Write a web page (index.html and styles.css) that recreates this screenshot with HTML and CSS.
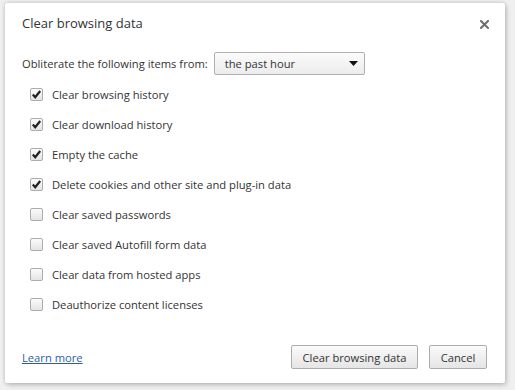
FILE: index.html
```html
<!DOCTYPE html>
<html>
<head>
<meta charset="utf-8">
<link rel="stylesheet" href="styles.css">
</head>
<body>
<div class="dialog">
  <div class="header">
    <div class="title">Clear browsing data</div>
    <div class="close">
      <svg width="9" height="9" viewBox="0 0 9 9"><path d="M1 1L8 8M8 1L1 8" stroke="#6e6e6e" stroke-width="2" stroke-linecap="square"/></svg>
    </div>
  </div>
  <div class="period-row">
    <span class="period-label">Obliterate the following items from:</span>
    <div class="select">
      <span>the past hour</span>
      <svg width="9" height="5" viewBox="0 0 9 5"><path d="M0 0H9L4.5 5Z" fill="#111"/></svg>
    </div>
  </div>
  <ul class="items">
    <li class="item"><span class="cb checked"><svg width="11" height="11" viewBox="0 0 11 11"><path d="M1.8 5.6L4.2 8.2L9.2 2" fill="none" stroke="#222" stroke-width="2.2"/></svg></span>Clear browsing history</li>
    <li class="item"><span class="cb checked"><svg width="11" height="11" viewBox="0 0 11 11"><path d="M1.8 5.6L4.2 8.2L9.2 2" fill="none" stroke="#222" stroke-width="2.2"/></svg></span>Clear download history</li>
    <li class="item"><span class="cb checked"><svg width="11" height="11" viewBox="0 0 11 11"><path d="M1.8 5.6L4.2 8.2L9.2 2" fill="none" stroke="#222" stroke-width="2.2"/></svg></span>Empty the cache</li>
    <li class="item"><span class="cb checked"><svg width="11" height="11" viewBox="0 0 11 11"><path d="M1.8 5.6L4.2 8.2L9.2 2" fill="none" stroke="#222" stroke-width="2.2"/></svg></span>Delete cookies and other site and plug-in data</li>
    <li class="item"><span class="cb"></span>Clear saved passwords</li>
    <li class="item"><span class="cb"></span>Clear saved Autofill form data</li>
    <li class="item"><span class="cb"></span>Clear data from hosted apps</li>
    <li class="item"><span class="cb"></span>Deauthorize content licenses</li>
  </ul>
  <div class="footer">
    <a class="link" href="#">Learn more</a>
    <div class="buttons">
      <button class="btn btn-clear">Clear browsing data</button>
      <button class="btn btn-cancel">Cancel</button>
    </div>
  </div>
</div>
</body>
</html>
```
FILE: styles.css
```css
html, body {
  margin: 0;
  padding: 0;
}
body {
  background: #f0f0f0;
  width: 515px;
  height: 390px;
  overflow: hidden;
  font-family: "Open Sans", "Noto Sans", sans-serif;
  font-size: 11.2px;
  color: #333;
}
.dialog {
  box-sizing: border-box;
  margin: 3px 0 0 5px;
  width: 500px;
  height: 380px;
  background: #fff;
  border-radius: 2px;
  box-shadow: 0 0 4px rgba(0,0,0,0.22), 2px 3px 5px rgba(0,0,0,0.12);
  padding: 0 18px 0 17px;
  display: flex;
  flex-direction: column;
}
.header {
  display: flex;
  justify-content: space-between;
  align-items: center;
  margin-top: 10px;
  height: 20px;
}
.title {
  font-size: 13px;
  line-height: 20px;
  color: #333;
}
.close {
  width: 9px;
  height: 9px;
  margin-right: -2px;
  margin-top: 2px;
  display: flex;
}
.period-row {
  display: flex;
  align-items: center;
  margin-top: 19px;
  height: 23px;
}
.period-label {
  margin-right: 6px;
}
.select {
  box-sizing: border-box;
  width: 151px;
  height: 23px;
  border: 1px solid #b0b0b0;
  border-radius: 2px;
  background: linear-gradient(#fbfbfb, #ececec);
  display: flex;
  align-items: center;
  justify-content: space-between;
  padding: 0 6px 0 10px;
}
.items {
  list-style: none;
  margin: 4px 0 0 0;
  padding: 0 0 0 8px;
}
.item {
  display: flex;
  align-items: center;
  height: 30px;
}
.cb {
  box-sizing: border-box;
  width: 13px;
  height: 13px;
  border: 1px solid #acacac;
  border-radius: 2px;
  background: linear-gradient(#fbfbfb, #e4e4e4);
  margin-right: 9px;
  display: flex;
  align-items: center;
  justify-content: center;
}
.footer {
  display: flex;
  justify-content: space-between;
  align-items: center;
  margin-top: 26px;
}
.link {
  color: #2a5db0;
  text-decoration: underline;
}
.buttons {
  display: flex;
  gap: 11px;
}
.btn {
  box-sizing: border-box;
  height: 24px;
  border: 1px solid #acacac;
  border-radius: 2px;
  background: linear-gradient(#fafafa, #e5e5e5);
  font-family: inherit;
  font-size: 11.2px;
  color: #333;
  padding: 0;
}
.btn-clear {
  width: 127px;
}
.btn-cancel {
  width: 58px;
}
```
